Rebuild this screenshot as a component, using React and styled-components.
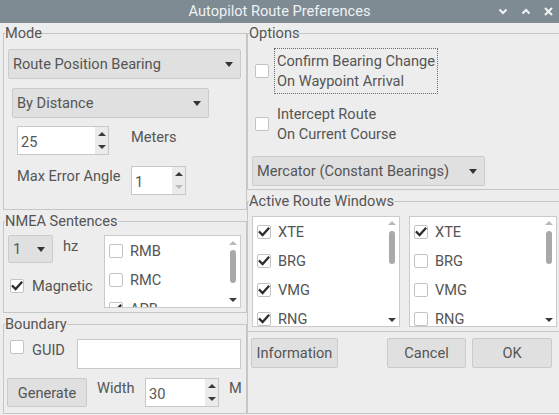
import React from 'react';
import styled, { createGlobalStyle } from 'styled-components';

const Global = createGlobalStyle`
  html, body { margin: 0; padding: 0; background: #ededed; }
  body {
    font-family: Roboto, "Noto Sans", "Liberation Sans", sans-serif;
    font-size: 14.6px;
    color: #555;
  }
  * { box-sizing: border-box; }
`;

const Window = styled.div`
  width: 559px;
  height: 415px;
  overflow: hidden;
  background: #ededed;
  display: flex;
  flex-direction: column;
`;

const TitleBar = styled.div`
  height: 23px;
  flex: none;
  background: #7e8b93;
  color: #eef1f3;
  display: grid;
  grid-template-columns: 1fr auto 1fr;
  align-items: center;
  font-size: 14.6px;
`;

const Title = styled.div`
  grid-column: 2;
  line-height: 23px;
`;

const Controls = styled.div`
  grid-column: 3;
  justify-self: end;
  display: flex;
  align-items: center;
  gap: 13px;
  padding-right: 6px;
`;

const Body = styled.div`
  flex: 1;
  display: flex;
  padding-top: 2px;
  padding-bottom: 1px;
  min-height: 0;
`;

const LeftCol = styled.div`
  width: 244px;
  margin-left: 3px;
  flex: none;
  display: flex;
  flex-direction: column;
  gap: 3px;
`;

const RightCol = styled.div`
  width: 314px;
  flex: none;
  display: flex;
  flex-direction: column;
  gap: 3px;
`;

const Group = styled.fieldset`
  margin: 0;
  padding: 0;
  min-width: 0;
  border: 1px solid #c6c6c6;
  flex: ${(p) => (p.$grow ? 1 : 'none')};
`;

const Legend = styled.legend`
  padding: 0;
  margin-left: 1px;
  line-height: 16px;
  font-size: 14.6px;
  color: #555;
`;

const ModeBody = styled.div`
  padding: 8px 5px 14px 4px;
  display: flex;
  flex-direction: column;
  align-items: flex-start;
`;

const Dropdown = styled.div`
  width: ${(p) => p.$w}px;
  height: ${(p) => p.$h || 30}px;
  margin-top: ${(p) => p.$mt || 0}px;
  margin-left: ${(p) => p.$ml || 0}px;
  border: 1px solid #cbcbcb;
  border-radius: 2px;
  background: #e0e0e0;
  display: flex;
  align-items: center;
  justify-content: space-between;
  padding: 0 7px 0 4px;
  color: #555;
  flex: none;
  white-space: nowrap;
`;

const Caret = styled.span`
  width: 0;
  height: 0;
  border-left: 4.5px solid transparent;
  border-right: 4.5px solid transparent;
  border-top: 5px solid #333;
  margin-top: 1px;
`;

const SpinGrid = styled.div`
  margin-top: 8px;
  margin-left: 9px;
  display: grid;
  grid-template-columns: 114px auto;
  row-gap: 11px;
  align-items: start;
`;

const Label = styled.span`
  line-height: 16px;
  margin-top: ${(p) => p.$mt || 0}px;
  margin-left: ${(p) => p.$ml || 0}px;
  width: ${(p) => (p.$w ? `${p.$w}px` : 'auto')};
  flex: none;
  white-space: nowrap;
`;

const SpinBox = styled.div`
  width: ${(p) => p.$w}px;
  height: 29px;
  margin-left: ${(p) => p.$ml || 0}px;
  border: 1px solid #c8c8c8;
  background: #fff;
  display: flex;
  flex: none;
`;

const SpinValue = styled.div`
  flex: 1;
  display: flex;
  align-items: center;
  padding-left: 3px;
  padding-top: 2px;
  color: #555;
`;

const SpinButtons = styled.div`
  width: 13px;
  background: #ebebeb;
  display: flex;
  flex-direction: column;
`;

const SpinHalf = styled.div`
  flex: 1;
  display: flex;
  align-items: center;
  justify-content: center;
`;

const ArrowUp = styled.span`
  width: 0;
  height: 0;
  border-left: 4px solid transparent;
  border-right: 4px solid transparent;
  border-bottom: 4px solid ${(p) => (p.$off ? '#b9b9b9' : '#3a3a3a')};
`;

const ArrowDown = styled.span`
  width: 0;
  height: 0;
  border-left: 4px solid transparent;
  border-right: 4px solid transparent;
  border-top: 4px solid ${(p) => (p.$off ? '#b9b9b9' : '#3a3a3a')};
`;

const NmeaBody = styled.div`
  padding: 6px 5px 4px 4px;
  display: flex;
  justify-content: space-between;
  align-items: flex-start;
`;

const NmeaLeft = styled.div`
  display: flex;
  flex-direction: column;
`;

const Row = styled.div`
  display: flex;
  align-items: ${(p) => p.$align || 'flex-start'};
  margin-top: ${(p) => p.$mt || 0}px;
  margin-left: ${(p) => p.$ml || 0}px;
`;

const BoxOuter = styled.span`
  width: 14px;
  height: 14px;
  flex: none;
  border: 1px solid #c3c3c3;
  border-radius: 2px;
  background: #fff;
  display: flex;
  align-items: center;
  justify-content: center;
  margin-top: ${(p) => p.$mt || 0}px;
  margin-left: ${(p) => p.$ml || 0}px;
`;

const CheckBox = ({ checked, mt, ml }) => (
  <BoxOuter $mt={mt} $ml={ml}>
    {checked && (
      <svg width="12" height="12" viewBox="0 0 12 12">
        <path d="M1.8 6.2 L4.6 9 L10.4 2.6" fill="none" stroke="#2c2c2c" strokeWidth="2.3" strokeLinecap="square" />
      </svg>
    )}
  </BoxOuter>
);

const List = styled.div`
  width: ${(p) => p.$w}px;
  height: ${(p) => p.$h}px;
  margin-top: ${(p) => p.$mt || 0}px;
  border: 1px solid #cbcbcb;
  background: #fff;
  display: flex;
  flex: none;
  overflow: hidden;
`;

const ListItems = styled.div`
  flex: 1;
  display: flex;
  flex-direction: column;
  overflow: hidden;
`;

const ListItem = styled.div`
  height: 29px;
  flex: none;
  display: flex;
  align-items: center;
  padding-left: 4px;
  gap: 7px;
  color: #555;
`;

const ScrollBar = styled.div`
  width: 14px;
  flex: none;
  display: flex;
  flex-direction: column;
  align-items: center;
  padding: ${(p) => p.$pad}px 0;
`;

const Thumb = styled.div`
  width: 6px;
  height: 33px;
  border-radius: 3px;
  background: #a9a9a9;
  margin-top: ${(p) => p.$mt}px;
`;

const Spacer = styled.div`
  flex: 1;
`;

const BoundaryBody = styled.div`
  padding: 7px 5px 4px 4px;
  display: flex;
  flex-direction: column;
`;

const TextField = styled.div`
  width: 164px;
  height: 30px;
  margin-left: auto;
  border: 1px solid #c8c8c8;
  background: #fff;
  flex: none;
`;

const Button = styled.div`
  width: ${(p) => p.$w}px;
  height: ${(p) => p.$h || 30}px;
  margin-left: ${(p) => (p.$auto ? 'auto' : `${p.$ml || 0}px`)};
  border: 1px solid #cbcbcb;
  border-radius: 2px;
  background: #e0e0e0;
  display: flex;
  align-items: center;
  justify-content: center;
  color: #555;
  flex: none;
`;

const OptionsBody = styled.div`
  padding: 7px 4px 3px 4px;
  display: flex;
  flex-direction: column;
  align-items: flex-start;
`;

const FocusBox = styled.div`
  margin-left: 5px;
  padding: 2px 2px;
  line-height: 20px;
  border: 1px dotted ${(p) => (p.$focus ? '#6a6a6a' : 'transparent')};
  color: #555;
  white-space: nowrap;
`;

const ActiveBody = styled.div`
  padding: 7px 3px 4px 4px;
  display: flex;
  gap: 9px;
`;

const ButtonPanel = styled.div`
  flex: 1;
  border-left: 1px solid #c6c6c6;
  border-bottom: 1px solid #c6c6c6;
  margin-top: -3px;
  padding: 6px 9px 0 3px;
  display: flex;
  align-items: flex-start;
`;

const Chevron = ({ up }) => (
  <svg width="10" height="7" viewBox="0 0 10 7">
    <polyline
      points={up ? '1.5,5.5 5,2 8.5,5.5' : '1.5,1.5 5,5 8.5,1.5'}
      fill="none"
      stroke="#f2f4f5"
      strokeWidth="2"
    />
  </svg>
);

const CloseIcon = () => (
  <svg width="9" height="9" viewBox="0 0 9 9">
    <path d="M1 1 L8 8 M8 1 L1 8" stroke="#f2f4f5" strokeWidth="2" />
  </svg>
);

const Spin = ({ w, value, downOff, ml }) => (
  <SpinBox $w={w} $ml={ml}>
    <SpinValue>{value}</SpinValue>
    <SpinButtons>
      <SpinHalf><ArrowUp /></SpinHalf>
      <SpinHalf><ArrowDown $off={downOff} /></SpinHalf>
    </SpinButtons>
  </SpinBox>
);

const CheckList = ({ w, h, items, pad, thumbTop }) => (
  <List $w={w} $h={h}>
    <ListItems>
      {items.map(([name, on]) => (
        <ListItem key={name}>
          <CheckBox checked={on} />
          <span>{name}</span>
        </ListItem>
      ))}
    </ListItems>
    <ScrollBar $pad={pad}>
      <ArrowUp $off />
      <Thumb $mt={thumbTop} />
      <Spacer />
      <ArrowDown />
    </ScrollBar>
  </List>
);

export default function App() {
  return (
    <>
      <Global />
      <Window>
        <TitleBar>
          <Title>Autopilot Route Preferences</Title>
          <Controls>
            <Chevron />
            <Chevron up />
            <CloseIcon />
          </Controls>
        </TitleBar>
        <Body>
          <LeftCol>
            <Group>
              <Legend>Mode</Legend>
              <ModeBody>
                <Dropdown $w={233}>
                  <span>Route Position Bearing</span>
                  <Caret />
                </Dropdown>
                <Dropdown $w={197} $mt={9} $ml={4}>
                  <span>By Distance</span>
                  <Caret />
                </Dropdown>
                <SpinGrid>
                  <Spin w={92} value="25" />
                  <Label $mt={3}>Meters</Label>
                  <Label $mt={2}>Max Error Angle</Label>
                  <Spin w={55} value="1" downOff />
                </SpinGrid>
              </ModeBody>
            </Group>
            <Group>
              <Legend>NMEA Sentences</Legend>
              <NmeaBody>
                <NmeaLeft>
                  <Row>
                    <Dropdown $w={45} $h={28}>
                      <span>1</span>
                      <Caret />
                    </Dropdown>
                    <Label $ml={10} $mt={3}>hz</Label>
                  </Row>
                  <Row $mt={15} $align="center">
                    <CheckBox checked ml={2} />
                    <Label $ml={8}>Magnetic</Label>
                  </Row>
                </NmeaLeft>
                <CheckList
                  w={137}
                  h={73}
                  pad={5}
                  thumbTop={5}
                  items={[['RMB', false], ['RMC', false], ['APB', true]]}
                />
              </NmeaBody>
            </Group>
            <Group $grow>
              <Legend>Boundary</Legend>
              <BoundaryBody>
                <Row>
                  <CheckBox ml={2} mt={1} />
                  <Label $ml={8} $mt={3}>GUID</Label>
                  <TextField />
                </Row>
                <Row $mt={9}>
                  <Button $w={80} $h={29} $ml={-1}>Generate</Button>
                  <Label $ml={10} $mt={2} $w={48}>Width</Label>
                  <Spin w={74} value="30" />
                  <Label $ml={10} $mt={2}>M</Label>
                </Row>
              </BoundaryBody>
            </Group>
          </LeftCol>
          <RightCol>
            <Group>
              <Legend>Options</Legend>
              <OptionsBody>
                <Row $align="center" $ml={3}>
                  <CheckBox />
                  <FocusBox $focus>
                    Confirm Bearing Change
                    <br />
                    On Waypoint Arrival
                  </FocusBox>
                </Row>
                <Row $align="center" $ml={3} $mt={7}>
                  <CheckBox />
                  <FocusBox>
                    Intercept Route
                    <br />
                    On Current Course
                  </FocusBox>
                </Row>
                <Dropdown $w={233} $mt={9}>
                  <span>Mercator (Constant Bearings)</span>
                  <Caret />
                </Dropdown>
              </OptionsBody>
            </Group>
            <Group>
              <Legend>Active Route Windows</Legend>
              <ActiveBody>
                <CheckList
                  w={148}
                  h={111}
                  pad={4}
                  thumbTop={6}
                  items={[['XTE', true], ['BRG', true], ['VMG', true], ['RNG', true]]}
                />
                <CheckList
                  w={148}
                  h={111}
                  pad={4}
                  thumbTop={6}
                  items={[['XTE', true], ['BRG', false], ['VMG', false], ['RNG', false]]}
                />
              </ActiveBody>
            </Group>
            <ButtonPanel>
              <Button $w={87}>Information</Button>
              <Button $w={79} $auto>Cancel</Button>
              <Button $w={80} $ml={6}>OK</Button>
            </ButtonPanel>
          </RightCol>
        </Body>
      </Window>
    </>
  );
}
